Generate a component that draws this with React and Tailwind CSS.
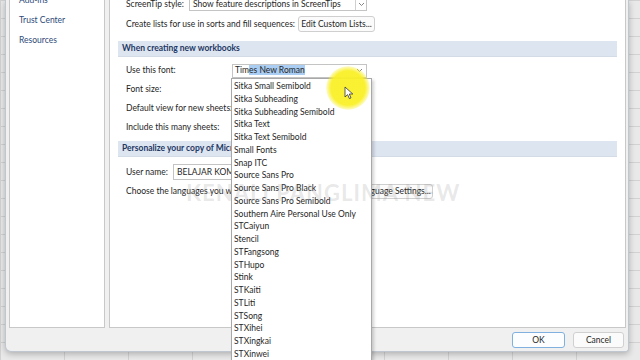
import React from 'react'

const fonts = [
  'Sitka Small Semibold',
  'Sitka Subheading',
  'Sitka Subheading Semibold',
  'Sitka Text',
  'Sitka Text Semibold',
  'Small Fonts',
  'Snap ITC',
  'Source Sans Pro',
  'Source Sans Pro Black',
  'Source Sans Pro Semibold',
  'Southern Aire Personal Use Only',
  'STCaiyun',
  'Stencil',
  'STFangsong',
  'STHupo',
  'Stink',
  'STKaiti',
  'STLiti',
  'STSong',
  'STXihei',
  'STXingkai',
  'STXinwei',
  'STZhongsong',
]

function Chevron() {
  return (
    <svg width="7" height="5" viewBox="0 0 7 5" className="shrink-0">
      <polyline points="1,1 3.5,3.5 6,1" fill="none" stroke="#777" strokeWidth="0.9" />
    </svg>
  )
}

function Header({ children }) {
  return (
    <div className="ml-[-8px] mr-[8px] h-[16px] flex items-center pl-[4px] bg-[#dde5f0] border-b border-[#d3dbe6] text-[8.5px] font-bold text-[#1f3864] whitespace-nowrap">
      {children}
    </div>
  )
}

function Row({ label, children }) {
  return (
    <div className="h-[19px] flex items-center">
      <span className="w-[106px] shrink-0 whitespace-nowrap">{label}</span>
      {children}
    </div>
  )
}

export default function App() {
  return (
    <div
      className="relative w-[640px] h-[360px] overflow-hidden bg-[#e9e9e9] bg-[linear-gradient(#d2d2d2_1px,transparent_1px),linear-gradient(90deg,#d2d2d2_1px,transparent_1px)] bg-[size:64px_18px] text-[#262626] text-[8.5px]"
      style={{ fontFamily: 'Lato, "Noto Sans", sans-serif' }}
    >
      {/* dialog */}
      <div className="ml-[5px] w-[624px] h-[352px] flex flex-col bg-[#f0f0f0] border-x border-b border-[#bfc6cf] rounded-bl-[6px] rounded-br-[3px] shadow-[0_2px_6px_rgba(0,0,0,0.25)]">
        <div className="flex gap-[4px] pl-[3px] pr-[2px] h-[328px]">
          {/* nav */}
          <div className="w-[96px] bg-white border-x border-b border-[#c8c8c8] text-[#2e4a78] pl-[9px]">
            <div className="mt-[-10px] h-[20px] flex items-center">Add-ins</div>
            <div className="h-[20px] flex items-center">Trust Center</div>
            <div className="h-[20px] flex items-center">Resources</div>
          </div>

          {/* content */}
          <div className="flex-1 bg-white border-x border-b border-[#c8c8c8] pl-[16px] overflow-hidden">
            <div className="mt-[-2px] h-[13px] flex items-center">
              <span className="w-[63px] shrink-0 whitespace-nowrap">ScreenTip style:</span>
              <div className="w-[178px] h-[13px] flex items-center border border-[#c4c4c4] bg-white">
                <span className="flex-1 pl-[3px] whitespace-nowrap">Show feature descriptions in ScreenTips</span>
                <div className="w-[11px] h-full flex items-center justify-center border-l border-[#d0d0d0]">
                  <Chevron />
                </div>
              </div>
            </div>

            <div className="mt-[5px] h-[16px] flex items-center">
              <span className="w-[172px] shrink-0 whitespace-nowrap">Create lists for use in sorts and fill sequences:</span>
              <div className="w-[77px] h-[16px] flex items-center justify-center border border-[#cfcfcf] rounded-[3px] bg-[#fbfbfb] whitespace-nowrap">
                Edit Custom Lists...
              </div>
            </div>

            <div className="mt-[9px]">
              <Header>When creating new workbooks</Header>
            </div>

            <div className="mt-[4px]">
              <Row label="Use this font:">
                <div className="w-[135px] h-[14px] flex items-center border border-[#c4c4c4] bg-white pr-[3px]">
                  <span className="flex-1 pl-[2px] whitespace-nowrap">
                    Tim<span className="bg-[#a9cdf3]">es New Roman</span>
                  </span>
                  <Chevron />
                </div>
              </Row>
              <Row label="Font size:" />
              <Row label="Default view for new sheets:" />
              <Row label="Include this many sheets:" />
            </div>

            <div className="mt-[4px]">
              <Header>Personalize your copy of Microsoft Office</Header>
            </div>

            <div className="mt-[7px] h-[16px] flex items-center">
              <span className="w-[47px] shrink-0 whitespace-nowrap">User name:</span>
              <div className="w-[170px] h-[16px] flex items-center border border-[#c4c4c4] pl-[3px] bg-white whitespace-nowrap">
                BELAJAR KOMPUTER
              </div>
            </div>

            <div className="mt-[4px] h-[15px] flex items-center">
              <span className="w-[229px] shrink-0 whitespace-nowrap overflow-hidden">Choose the languages you want to use with Office:</span>
              <div className="w-[78px] h-[15px] flex items-center justify-center border border-[#cfcfcf] rounded-[3px] bg-[#fbfbfb] whitespace-nowrap">
                Language Settings...
              </div>
            </div>
          </div>
        </div>

        {/* footer */}
        <div className="flex justify-end gap-[8px] pt-[4px] pr-[4px]">
          <div className="w-[53px] h-[16px] flex items-center justify-center border border-[#7fb0df] rounded-[3px] bg-[#fcfdfe]">OK</div>
          <div className="w-[51px] h-[16px] flex items-center justify-center border border-[#d0d0d0] rounded-[3px] bg-[#fbfbfb]">Cancel</div>
        </div>
      </div>

      {/* open font list */}
      <div className="absolute left-[231px] top-[78px] w-[141px] h-[300px] bg-white border border-[#a8a8a8] shadow-[2px_2px_3px_rgba(0,0,0,0.18)] pt-[1px] overflow-hidden">
        {fonts.map(f => (
          <div key={f} className="h-[12.75px] flex items-center pl-[2px] whitespace-nowrap">{f}</div>
        ))}
      </div>

      {/* watermark */}
      <div className="absolute left-[186px] top-[176px] text-[22px] font-bold tracking-[1px] text-[#8a8a8a]/20 whitespace-nowrap pointer-events-none">
        KENALI PANGLIMA NEW
      </div>

      {/* cursor highlight */}
      <div className="absolute left-[326px] top-[66px] w-[44px] h-[44px] rounded-full bg-[radial-gradient(circle,rgba(250,240,40,0.95)_55%,rgba(250,240,40,0.35)_68%,transparent_72%)]" />
      <svg className="absolute left-[344px] top-[86px]" width="10" height="14" viewBox="0 0 10 14">
        <path d="M1 1 L1 11 L3.6 8.6 L5.4 12.6 L7 11.9 L5.3 8 L8.8 8 Z" fill="#fff" stroke="#333" strokeWidth="0.8" strokeLinejoin="round" />
      </svg>
    </div>
  )
}
